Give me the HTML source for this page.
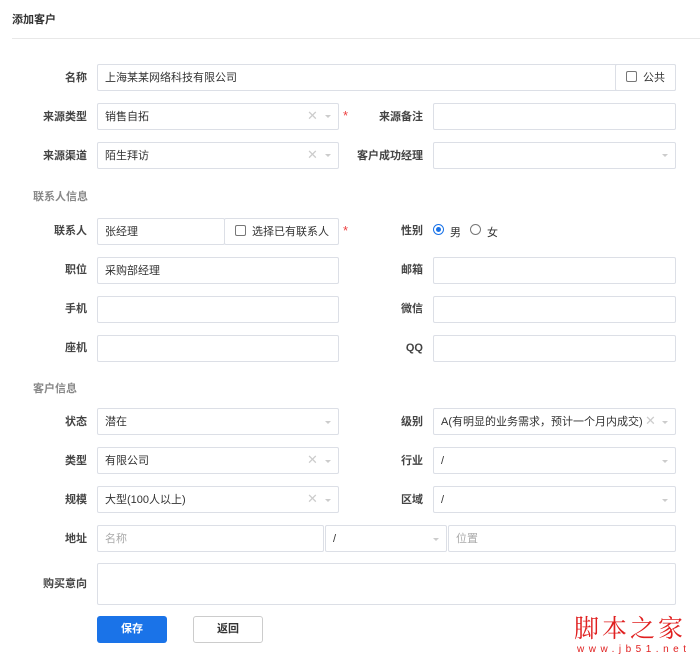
<!DOCTYPE html><html><head><meta charset="utf-8"><style>
body{margin:0;width:700px;height:661px;background:#fff;font-family:"Liberation Sans","Noto Sans CJK SC",sans-serif;font-size:11px;color:#333;position:relative;overflow:hidden}
.a{position:absolute}
.t{font-weight:bold;font-size:11px}
.l{position:absolute;text-align:right;font-weight:bold;color:#444;width:100px;line-height:14px;margin-top:1px}
.i{position:absolute;border:1px solid #dcdfe6;box-sizing:border-box;height:27px;line-height:26px;padding-left:7px;border-radius:2px;background:#fff}
.x{color:#ccc;font-size:13px}
.ar{position:absolute;width:0;height:0;border-left:3px solid transparent;border-right:3px solid transparent;border-top:3px solid #ccc}
.st{position:absolute;color:#ed4040;font-size:13px}
.cb{display:inline-block;width:9px;height:9px;border:1px solid #777;border-radius:2px;vertical-align:-1px;margin-right:6px}
.sec{position:absolute;color:#888;font-weight:bold;left:33px}
</style></head><body>
<div class="a t" style="left:12px;top:11px">添加客户</div>
<div class="a" style="left:12px;top:38px;width:688px;height:1px;background:#e8e8e8"></div>

<div class="l" style="left:-13px;top:70px">名称</div>
<div class="i" style="left:97px;top:64px;width:579px">上海某某网络科技有限公司</div>
<div class="i" style="left:615px;top:64px;width:61px;padding-left:10px;background:#fff"><span class="cb"></span>公共</div>

<div class="l" style="left:-13px;top:109px">来源类型</div>
<div class="i" style="left:97px;top:103px;width:242px">销售自拓</div>
<span class="a x" style="left:307px;top:108px">✕</span><div class="ar" style="left:325px;top:115px"></div>
<span class="st" style="left:343px;top:108px">*</span>
<div class="l" style="left:323px;top:109px">来源备注</div>
<div class="i" style="left:433px;top:103px;width:243px"></div>

<div class="l" style="left:-13px;top:148px">来源渠道</div>
<div class="i" style="left:97px;top:142px;width:242px">陌生拜访</div>
<span class="a x" style="left:307px;top:147px">✕</span><div class="ar" style="left:325px;top:154px"></div>
<div class="l" style="left:323px;top:148px">客户成功经理</div>
<div class="i" style="left:433px;top:142px;width:243px"></div><div class="ar" style="left:662px;top:154px"></div>

<div class="sec" style="top:188px">联系人信息</div>

<div class="l" style="left:-13px;top:223px">联系人</div>
<div class="i" style="left:97px;top:218px;width:128px">张经理</div>
<div class="i" style="left:224px;top:218px;width:115px;padding-left:10px"><span class="cb"></span>选择已有联系人</div>
<span class="st" style="left:343px;top:223px">*</span>
<div class="l" style="left:323px;top:223px">性别</div>
<div class="a" style="left:433px;top:224px;width:9px;height:9px;border:1px solid #1a73e8;border-radius:50%"><div style="margin:2px;width:5px;height:5px;border-radius:50%;background:#1a73e8"></div></div>
<span class="a" style="left:450px;top:224px">男</span>
<div class="a" style="left:470px;top:224px;width:9px;height:9px;border:1px solid #777;border-radius:50%"></div>
<span class="a" style="left:487px;top:224px">女</span>

<div class="l" style="left:-13px;top:262px">职位</div>
<div class="i" style="left:97px;top:257px;width:242px">采购部经理</div>
<div class="l" style="left:323px;top:262px">邮箱</div>
<div class="i" style="left:433px;top:257px;width:243px"></div>

<div class="l" style="left:-13px;top:301px">手机</div>
<div class="i" style="left:97px;top:296px;width:242px"></div>
<div class="l" style="left:323px;top:301px">微信</div>
<div class="i" style="left:433px;top:296px;width:243px"></div>

<div class="l" style="left:-13px;top:340px">座机</div>
<div class="i" style="left:97px;top:335px;width:242px"></div>
<div class="l" style="left:323px;top:340px">QQ</div>
<div class="i" style="left:433px;top:335px;width:243px"></div>

<div class="sec" style="top:380px">客户信息</div>

<div class="l" style="left:-13px;top:414px">状态</div>
<div class="i" style="left:97px;top:408px;width:242px">潜在</div><div class="ar" style="left:325px;top:421px"></div>
<div class="l" style="left:323px;top:414px">级别</div>
<div class="i" style="left:433px;top:408px;width:243px;padding-left:7px">A(有明显的业务需求，预计一个月内成交)</div>
<span class="a x" style="left:645px;top:413px">✕</span><div class="ar" style="left:662px;top:421px"></div>

<div class="l" style="left:-13px;top:453px">类型</div>
<div class="i" style="left:97px;top:447px;width:242px">有限公司</div>
<span class="a x" style="left:307px;top:452px">✕</span><div class="ar" style="left:325px;top:460px"></div>
<div class="l" style="left:323px;top:453px">行业</div>
<div class="i" style="left:433px;top:447px;width:243px">/</div><div class="ar" style="left:662px;top:460px"></div>

<div class="l" style="left:-13px;top:492px">规模</div>
<div class="i" style="left:97px;top:486px;width:242px">大型(100人以上)</div>
<span class="a x" style="left:307px;top:491px">✕</span><div class="ar" style="left:325px;top:499px"></div>
<div class="l" style="left:323px;top:492px">区域</div>
<div class="i" style="left:433px;top:486px;width:243px">/</div><div class="ar" style="left:662px;top:499px"></div>

<div class="l" style="left:-13px;top:531px">地址</div>
<div class="i" style="left:97px;top:525px;width:227px;color:#aaa">名称</div>
<div class="i" style="left:325px;top:525px;width:122px">/</div><div class="ar" style="left:433px;top:538px"></div>
<div class="i" style="left:448px;top:525px;width:228px;color:#aaa">位置</div>

<div class="l" style="left:-13px;top:576px">购买意向</div>
<div class="i" style="left:97px;top:563px;width:579px;height:42px"></div>

<div class="a" style="left:97px;top:616px;width:70px;height:27px;background:#1a73e8;border-radius:3px;color:#fff;font-weight:bold;text-align:center;line-height:27px">保存</div>
<div class="a" style="left:193px;top:616px;width:70px;height:27px;box-sizing:border-box;border:1px solid #ccc;border-radius:3px;text-align:center;line-height:25px;font-weight:bold">返回</div>

<div class="a" style="left:574px;top:612px;color:#e02020;font-size:25px;font-family:'Noto Serif CJK SC',serif;letter-spacing:3px;line-height:30px">脚本之家</div>
<div class="a" style="left:577px;top:644px;color:#e02020;font-size:10px;letter-spacing:4.5px">www.jb51.net</div>
</body></html>
